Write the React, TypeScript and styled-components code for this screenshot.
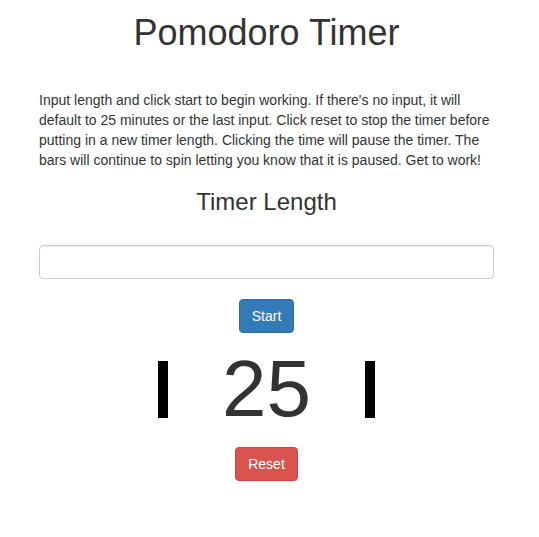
import React from "react";
import styled, { createGlobalStyle } from "styled-components";

const GlobalStyle = createGlobalStyle`
  html, body {
    margin: 0;
    padding: 0;
    background: #fff;
  }
  body {
    font-family: "Liberation Sans", Arial, Helvetica, sans-serif;
    font-size: 14px;
    line-height: 20px;
    color: #333;
  }
  * { box-sizing: border-box; }
`;

const Page = styled.div`
  display: flex;
  flex-direction: column;
  align-items: stretch;
  padding: 13px 45px 0 39px;
`;

const Title = styled.h1`
  margin: 0;
  font-size: 36px;
  line-height: 40px;
  font-weight: 400;
  text-align: center;
  color: #333;
`;

const Intro = styled.p`
  margin: 37px 0 0;
  font-size: 14px;
  line-height: 20px;
`;

const SubTitle = styled.h3`
  margin: 19px 0 0;
  font-size: 24px;
  line-height: 26px;
  font-weight: 400;
  text-align: center;
`;

const LengthInput = styled.input`
  margin-top: 30px;
  display: block;
  width: 100%;
  height: 34px;
  padding: 6px 12px;
  font-family: inherit;
  font-size: 14px;
  color: #555;
  background: #fff;
  border: 1px solid #ccc;
  border-radius: 4px;
  box-shadow: inset 0 1px 1px rgba(0, 0, 0, 0.075);
  outline: none;
`;

const Button = styled.button<{ $variant: "primary" | "danger"; $gap: number }>`
  align-self: center;
  margin-top: ${(p) => p.$gap}px;
  padding: 6px 12px;
  font-family: inherit;
  font-size: 14px;
  line-height: 20px;
  color: #fff;
  border-radius: 4px;
  cursor: pointer;
  background: ${(p) => (p.$variant === "primary" ? "#337ab7" : "#d9534f")};
  border: 1px solid ${(p) => (p.$variant === "primary" ? "#2e6da4" : "#d43f3a")};
`;

const TimerRow = styled.div`
  margin-top: 12px;
  display: flex;
  justify-content: center;
  align-items: center;
  gap: 54px;
`;

const Bar = styled.div`
  width: 10px;
  height: 57px;
  background: #000;
`;

const Time = styled.div`
  font-size: 80px;
  line-height: 88px;
  color: #333;
  cursor: pointer;
`;

export default function App() {
  return (
    <>
      <GlobalStyle />
      <Page>
        <Title>Pomodoro Timer</Title>
        <Intro>
          Input length and click start to begin working. If there's no input, it will
          default to 25 minutes or the last input. Click reset to stop the timer before
          putting in a new timer length. Clicking the time will pause the timer. The bars
          will continue to spin letting you know that it is paused. Get to work!
        </Intro>
        <SubTitle>Timer Length</SubTitle>
        <LengthInput type="text" />
        <Button $variant="primary" $gap={20}>Start</Button>
        <TimerRow>
          <Bar />
          <Time>25</Time>
          <Bar />
        </TimerRow>
        <Button $variant="danger" $gap={14}>Reset</Button>
      </Page>
    </>
  );
}
